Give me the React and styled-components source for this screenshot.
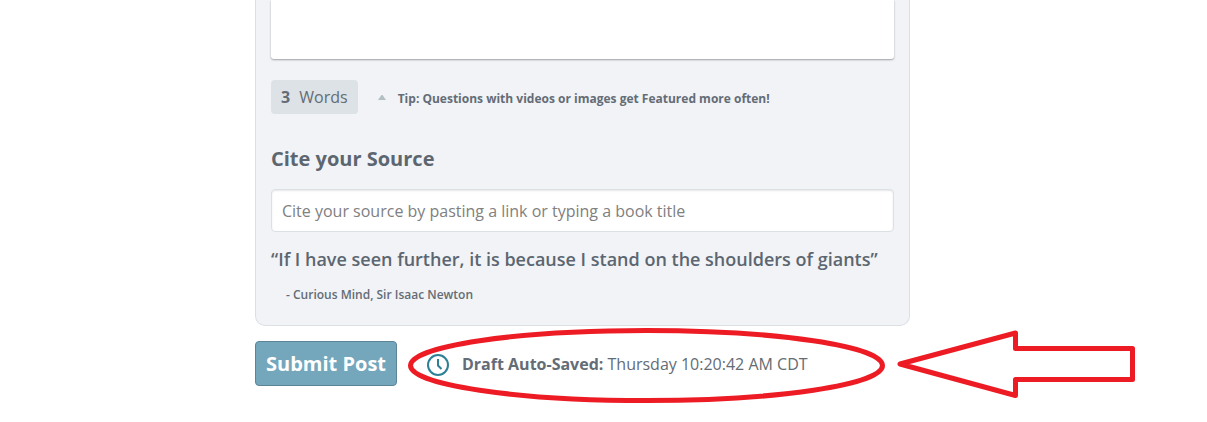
import styled, { createGlobalStyle } from 'styled-components';

const App = () => (
  <>
    <GlobalStyle />
    <Page>
      <Panel>
        <Editor aria-label="Post body" />
        <Meta>
          <WordCount>
            <b>3</b> Words
          </WordCount>
          <Caret viewBox="0 0 8 5" aria-hidden="true">
            <path d="M3.500 0H4.500L8 5H0Z" fill="#b0c0c3" />
          </Caret>
          <Tip>Tip: Questions with videos or images get Featured more often!</Tip>
        </Meta>
        <Label htmlFor="source">Cite your Source</Label>
        <SourceInput
          id="source"
          type="text"
          placeholder="Cite your source by pasting a link or typing a book title"
        />
        <Quote>“If I have seen further, it is because I stand on the shoulders of giants”</Quote>
        <Author>- Curious Mind, Sir Isaac Newton</Author>
      </Panel>
      <Footer>
        <Submit type="button">Submit Post</Submit>
        <Status>
          <Clock viewBox="0 0 22 22" aria-hidden="true">
            <circle cx="11" cy="11" r="10" />
            <path d="M11 5v6.500l3.500 3.500" />
          </Clock>
          <span>
            <b>Draft Auto-Saved:</b> Thursday 10:20:42 AM CDT
          </span>
        </Status>
        <Markup viewBox="400 320 745 90" aria-hidden="true">
          <ellipse cx="646.5" cy="365.5" rx="236" ry="35" />
          <path d="M900 364 1015.500 333V348.500H1132.500V379.500H1015.500V395.500Z" />
        </Markup>
      </Footer>
    </Page>
  </>
);

const GlobalStyle = createGlobalStyle`
  *, *::before, *::after {
    box-sizing: border-box;
  }

  body {
    margin: 0;
    background: #ffffff;
    color: #646c75;
    font-family: 'Open Sans', sans-serif;
    font-size: 16px;
    line-height: 24px;
  }
`;

const Page = styled.main`
  max-width: 910px;
  padding: 0 0 36px 255px;
`;

const Panel = styled.section`
  display: flex;
  flex-direction: column;
  padding: 0 15px 18px;
  background: #f1f3f7;
  border: 1px solid #dbe0e5;
  border-top: 0;
  border-radius: 0 0 10px 10px;
`;

const Editor = styled.textarea`
  display: block;
  width: 100%;
  height: 59px;
  padding: 10px;
  border: 0;
  border-radius: 0 0 3px 3px;
  background: #ffffff;
  color: inherit;
  font: inherit;
  resize: none;
  outline: none;
  box-shadow: 0 1px 2px rgba(0, 0, 0, 0.35);
`;

const Meta = styled.div`
  display: flex;
  align-items: center;
  margin-top: 21px;
`;

const WordCount = styled.div`
  padding: 5px 10px;
  border-radius: 4px;
  background: #dce2e6;
  white-space: pre;

  b {
    margin-right: 5px;
  }
`;

const Caret = styled.svg`
  width: 8px;
  height: 5px;
  margin: 0 12px 0 20px;
`;

const Tip = styled.span`
  padding-top: 4px;
  font-size: 12px;
  font-weight: 700;
`;

const Label = styled.label`
  margin-top: 31px;
  color: #5c6670;
  font-size: 20px;
  font-weight: 700;
  line-height: 28px;
`;

const SourceInput = styled.input`
  width: 100%;
  height: 43px;
  margin-top: 16px;
  padding: 0 10px;
  border: 1px solid #dbe0e5;
  border-radius: 4px;
  background: #ffffff;
  color: inherit;
  font: inherit;
  outline: none;
  box-shadow: inset 0 1px 2px rgba(0, 0, 0, 0.1);

  &::placeholder {
    color: #808080;
    opacity: 1;
  }
`;

const Quote = styled.p`
  margin: 13px 0 0;
  color: #5c6670;
  font-size: 18px;
  font-weight: 600;
  line-height: 28px;
`;

const Author = styled.p`
  margin: 10px 0 0 15px;
  font-size: 12px;
  font-weight: 600;
`;

const Footer = styled.div`
  position: relative;
  display: flex;
  align-items: center;
  gap: 30px;
  margin-top: 15px;
`;

const Submit = styled.button`
  height: 45px;
  padding: 0 10px;
  border: 1px solid #5b8496;
  border-radius: 4px;
  background: #74a6bc;
  color: #ffffff;
  font-family: inherit;
  font-size: 20px;
  font-weight: 700;
  white-space: nowrap;
  cursor: pointer;
`;

const Status = styled.div`
  display: flex;
  align-items: flex-end;
  gap: 13px;
  white-space: nowrap;
`;

const Clock = styled.svg`
  width: 22px;
  height: 22px;
  fill: none;
  stroke: #2d8095;
  stroke-width: 2;
`;

/* Hand-drawn callout that sits over the save status */
const Markup = styled.svg`
  position: absolute;
  top: -21px;
  left: 145px;
  width: 745px;
  height: 90px;
  fill: none;
  stroke: #ed1c24;
  stroke-width: 5;
  stroke-linejoin: round;
  pointer-events: none;
`;

export default App;
